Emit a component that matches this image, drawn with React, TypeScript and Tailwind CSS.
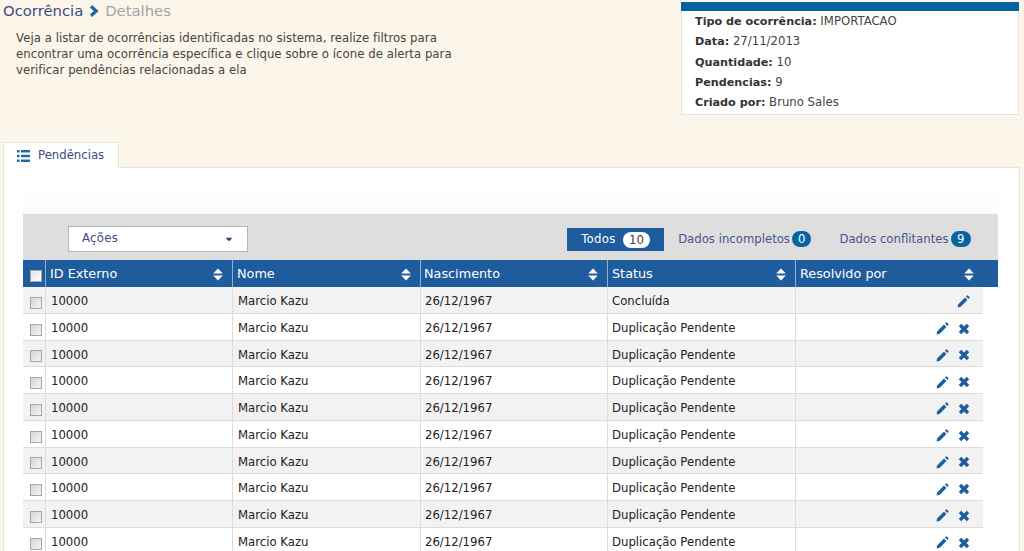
import { FaCaretDown } from 'react-icons/fa';

const font = "[font-family:'DejaVu_Sans',Verdana,sans-serif]";
const cols = 'grid grid-cols-[22px_187px_188px_187px_188px_1fr]';

const info = [
    ['Tipo de ocorrência:', 'IMPORTACAO'],
    ['Data:', '27/11/2013'],
    ['Quantidade:', '10'],
    ['Pendencias:', '9'],
    ['Criado por:', 'Bruno Sales'],
];

const rows = [
    { status: 'Concluída', done: true },
    ...Array.from({ length: 9 }, () => ({ status: 'Duplicação Pendente', done: false })),
];

function SortIcon() {
    return (
        <svg width="10" height="13" viewBox="0 0 10 13" className="shrink-0 text-white" fill="currentColor">
            <path d="M5 0.5L9.8 5.5H0.2Z" />
            <path d="M5 12.5L9.8 7.5H0.2Z" />
        </svg>
    );
}

function Chevron() {
    return (
        <svg width="10" height="12" viewBox="0 0 10 12" className="ml-[6px] mr-[6px] text-[#1f6a9f]" fill="none" stroke="currentColor" strokeWidth="3.2">
            <path d="M2 1.2L7.2 6L2 10.8" />
        </svg>
    );
}

function ListIcon() {
    return (
        <svg width="13" height="12" viewBox="0 0 13 12" className="shrink-0 text-[#1f6a9f]" fill="currentColor">
            <path d="M0 0h2.5v2.5H0zM4 0h9v2.5H4zM0 4.7h2.5v2.5H0zM4 4.7h9v2.5H4zM0 9.4h2.5v2.5H0zM4 9.4h9v2.5H4z" />
        </svg>
    );
}

function Pencil() {
    return (
        <svg width="13" height="13" viewBox="0 0 13 13" className="shrink-0" fill="currentColor">
            <path d="M0.5 12.5L1.3 9.2L8 2.5L10.4 4.9L3.8 11.7Z" />
            <path d="M9 1.5L10 0.5Q10.4 0.2 10.8 0.5L12.4 2.1Q12.8 2.5 12.4 2.9L11.4 3.9Z" />
        </svg>
    );
}

function Cross() {
    return (
        <svg width="12" height="12" viewBox="0 0 12 12" className="shrink-0" fill="none" stroke="currentColor" strokeWidth="3.4">
            <path d="M2 2L10 10M10 2L2 10" />
        </svg>
    );
}

function CheckBox({ light }: { light?: boolean }) {
    return (
        <span
            className={`block w-[12px] h-[12px] border border-[#a5a5a5] bg-gradient-to-br ${
                light ? 'from-[#e4e4e4] to-[#ffffff]' : 'from-[#d4d4d4] to-[#f6f6f6]'
            }`}
        />
    );
}

function HeaderCell({ label, className }: { label: string; className?: string }) {
    return (
        <div className={`flex items-center justify-between pt-[1px] border-l border-[#8fb0d2] text-[12.8px] leading-none text-white ${className ?? 'pl-[4px] pr-[9px]'}`}>
            <span>{label}</span>
            <SortIcon />
        </div>
    );
}

export default function App() {
    return (
        <div className={`h-[551px] overflow-hidden bg-[#fcf5ea] text-[11.7px] text-[#333] ${font}`}>
            <div className="flex h-[142px] items-start">
                <div className="w-[681px] shrink-0 pl-[3px]">
                    <div className="flex items-center h-[22px] text-[14.8px] leading-none">
                        <span className="text-[#3d4a86]">Ocorrência</span>
                        <Chevron />
                        <span className="text-[#a3a3a3]">Detalhes</span>
                    </div>
                    <p className="mt-[8px] ml-[13px] w-[450px] leading-[16px] tracking-[0.05px] text-[#444]">
                        Veja a listar de ocorrências identificadas no sistema, realize filtros para encontrar uma ocorrência específica e clique sobre o ícone de alerta para verificar pendências relacionadas a ela
                    </p>
                </div>
                <div className="mt-[2px] w-[338px] h-[113px] bg-white border border-[#e6e3de] border-t-0">
                    <div className="h-[9px] bg-[#06659f] -mx-px" />
                    <div className="pl-[13px]">
                        {info.map(([k, v]) => (
                            <div key={k} className="h-[20.3px] leading-[20px]">
                                <b className="text-[11.2px] text-[#333]">{k}</b> <span className="text-[#444]">{v}</span>
                            </div>
                        ))}
                    </div>
                </div>
            </div>

            <div className="ml-[3px] flex items-center gap-[8px] w-[116px] h-[26px] pl-[13px] -mb-px relative bg-white border border-[#e6e3de] border-b-0 text-[#3d4a86]">
                <ListIcon />
                <span>Pendências</span>
            </div>

            <div className="ml-[3px] mr-[4px] h-[400px] bg-white border border-[#e6e3de] pt-[20px] pl-[19px] pr-[21px]">
                <div className="h-[26px] bg-gradient-to-b from-[#ffffff] to-[#fbfbfb]" />
                <div className="flex items-center justify-between h-[46px] bg-[#dedede] pl-[45px] pr-[27px] pt-[4px]">
                    <div className="flex items-center justify-between w-[180px] h-[26px] px-[13px] bg-white border border-[#b5b5b5] text-[#3d4a86]">
                        <span className="tracking-[0.3px]">Ações</span>
                        <FaCaretDown size={10} className="text-[#2a3f80]" />
                    </div>
                    <div className="flex items-center pt-[1px]">
                        <div className="flex items-center gap-[7px] w-[97px] h-[23px] pl-[14px] bg-[#1e5c9e] text-white">
                            <span className="tracking-[0.3px]">Todos</span>
                            <span className="px-[6.5px] h-[16px] leading-[16px] rounded-full bg-white text-[#444]">10</span>
                        </div>
                        <div className="flex items-center ml-[14px] text-[#4a5590]">
                            <span>Dados incompletos</span>
                            <span className="ml-[2px] px-[6px] h-[16px] leading-[16px] rounded-full bg-[#06659f] text-white">0</span>
                        </div>
                        <div className="flex items-center ml-[28px] text-[#4a5590]">
                            <span>Dados conflitantes</span>
                            <span className="ml-[2px] px-[6.5px] h-[16px] leading-[16px] rounded-full bg-[#06659f] text-white">9</span>
                        </div>
                    </div>
                </div>

                <div className={`${cols} h-[27px] bg-[#1e5c9e]`}>
                    <div className="flex items-center pl-[7px] pt-[5px]">
                        <CheckBox light />
                    </div>
                    <HeaderCell label="ID Externo" />
                    <HeaderCell label="Nome" />
                    <HeaderCell label="Nascimento" className="pl-[3px] pr-[9px]" />
                    <HeaderCell label="Status" />
                    <HeaderCell label="Resolvido por" className="pl-[4px] pr-[24px]" />
                </div>

                <div className="mr-[15px]">
                    {rows.map((r, i) => (
                        <div key={i} className={`${cols} h-[26.75px] border-b border-[#dcdcdc] text-[#222] ${i % 2 === 0 ? 'bg-[#f2f2f2]' : 'bg-white'}`}>
                            <div className="flex items-center pl-[7px] pt-[6px]">
                                <CheckBox />
                            </div>
                            <div className="flex items-center pl-[5px] pt-[4px] border-l border-[#dcdcdc]">10000</div>
                            <div className="flex items-center pl-[5px] pt-[4px] border-l border-[#dcdcdc]">Marcio Kazu</div>
                            <div className="flex items-center pl-[4px] pt-[4px] border-l border-[#dcdcdc]">26/12/1967</div>
                            <div className="flex items-center pl-[4px] pt-[4px] border-l border-[#dcdcdc]">{r.status}</div>
                            <div className="flex items-center justify-end gap-[9px] pr-[13px] pt-[4px] border-l border-[#dcdcdc] text-[#1e5c9e]">
                                {r.done ? (
                                    <Pencil />
                                ) : (
                                    <>
                                        <Pencil />
                                        <Cross />
                                    </>
                                )}
                            </div>
                        </div>
                    ))}
                </div>
            </div>
        </div>
    );
}
